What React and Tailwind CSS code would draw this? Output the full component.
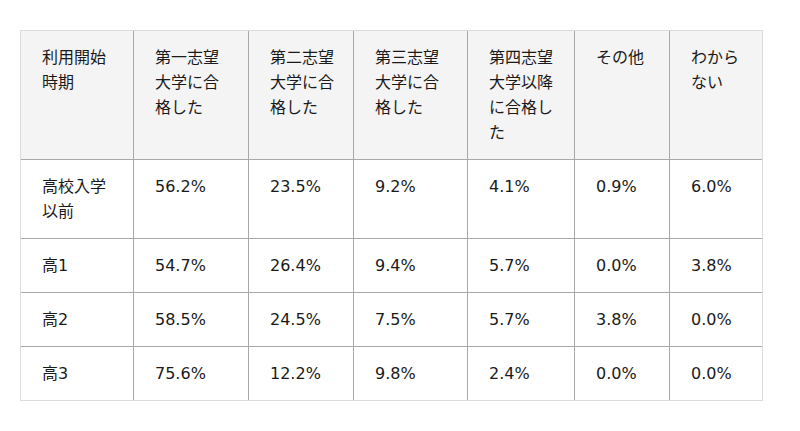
const headers = [
  ["利用開始", "時期"],
  ["第一志望", "大学に合", "格した"],
  ["第二志望", "大学に合", "格した"],
  ["第三志望", "大学に合", "格した"],
  ["第四志望", "大学以降", "に合格し", "た"],
  ["その他"],
  ["わから", "ない"],
];

const rows = [
  [["高校入学", "以前"], "56.2%", "23.5%", "9.2%", "4.1%", "0.9%", "6.0%"],
  [["高1"], "54.7%", "26.4%", "9.4%", "5.7%", "0.0%", "3.8%"],
  [["高2"], "58.5%", "24.5%", "7.5%", "5.7%", "3.8%", "0.0%"],
  [["高3"], "75.6%", "12.2%", "9.8%", "2.4%", "0.0%", "0.0%"],
];

const widths = [112, 115, 105, 114, 107, 95, 93];

export default function App() {
  return (
    <div
      className="w-[800px] h-[431px] bg-white pt-[30px] pl-[20px] text-[16px] leading-[25px] text-[#1a1a1a]"
      style={{ fontFamily: '"DejaVu Sans", "Noto Sans CJK JP", sans-serif' }}
    >
      <table className="table-fixed border-separate border-spacing-0 border border-[#dcdcdc]">
        <colgroup>
          {widths.map((w, i) => (
            <col key={i} style={{ width: w }} />
          ))}
        </colgroup>
        <thead>
          <tr className="bg-[#f4f4f4]">
            {headers.map((h, i) => (
              <th
                key={i}
                className={`align-top text-left font-normal pt-[14px] pb-[14px] pl-[21px] pr-2 ${i > 0 ? "border-l border-[#a8a8a8]" : ""}`}
              >
                {h.map((line, j) => (
                  <div key={j}>{line}</div>
                ))}
              </th>
            ))}
          </tr>
        </thead>
        <tbody>
          {rows.map((r, ri) => (
            <tr key={ri}>
              {r.map((c, ci) => (
                <td
                  key={ci}
                  className={`align-top pt-[14px] pb-[14px] pl-[21px] pr-2 border-t border-[#a8a8a8] ${ci > 0 ? "border-l" : ""}`}
                >
                  {Array.isArray(c) ? c.map((line, j) => <div key={j}>{line}</div>) : c}
                </td>
              ))}
            </tr>
          ))}
        </tbody>
      </table>
    </div>
  );
}
